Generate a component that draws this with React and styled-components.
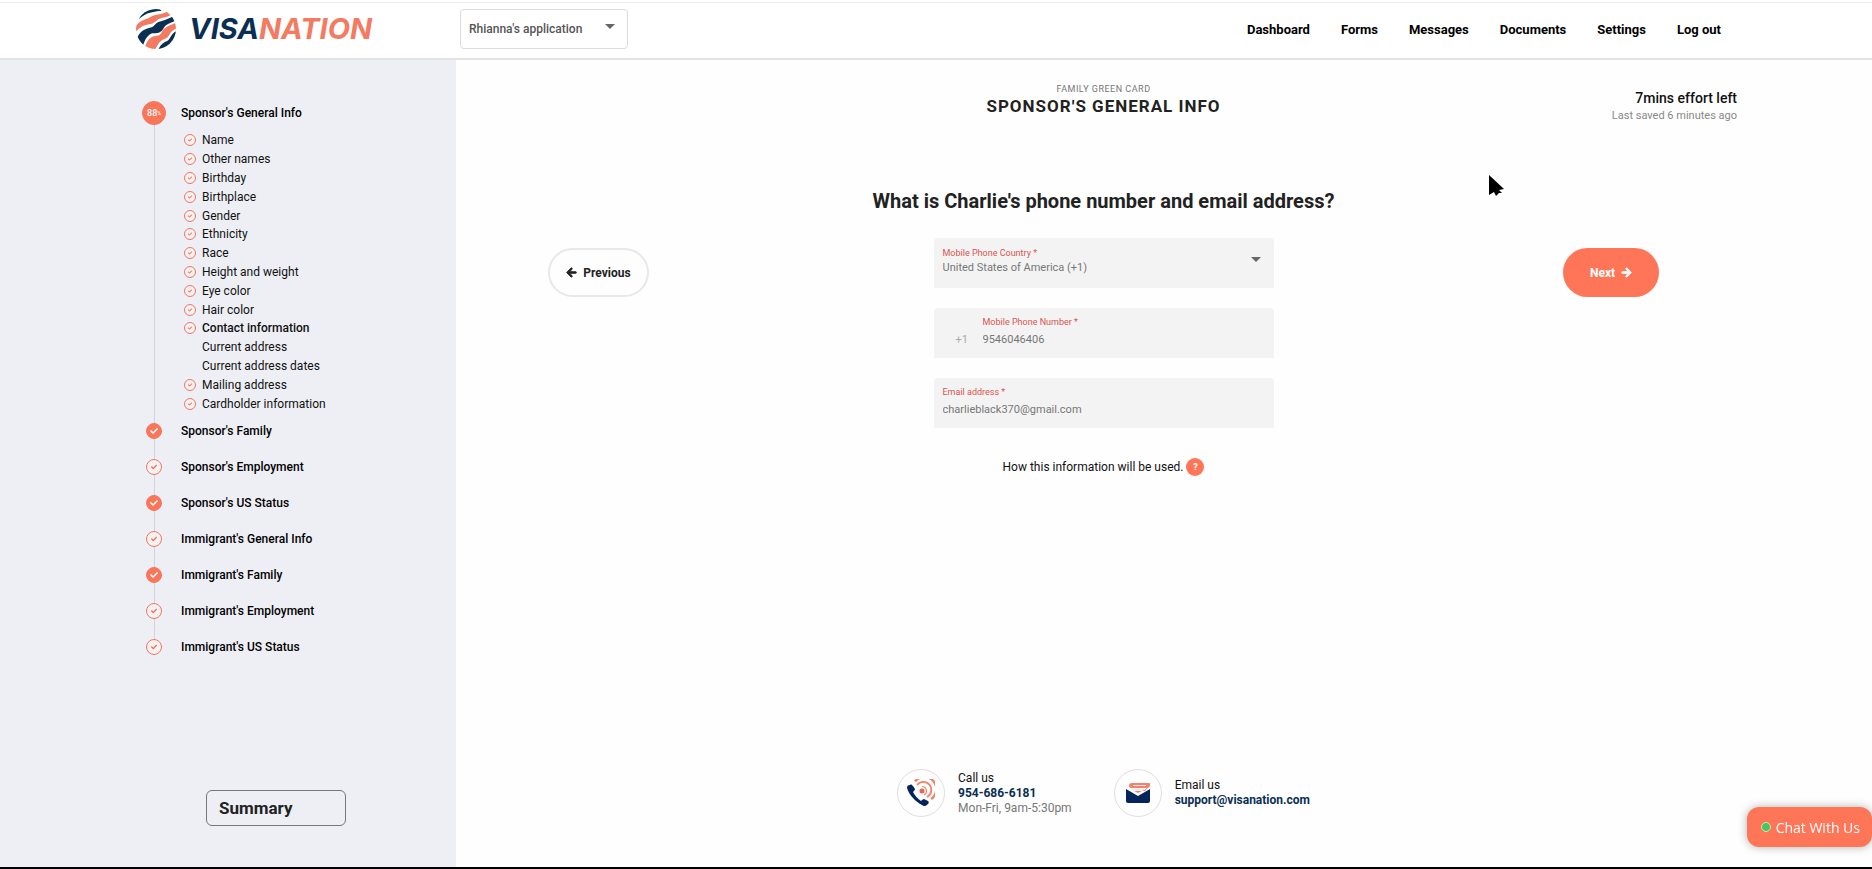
import React, { useState } from "react";
import styled, { createGlobalStyle } from "styled-components";
import { FaArrowLeft, FaArrowRight, FaCheck } from "react-icons/fa";

const topics = [
  { name: "Name", done: true },
  { name: "Other names", done: true },
  { name: "Birthday", done: true },
  { name: "Birthplace", done: true },
  { name: "Gender", done: true },
  { name: "Ethnicity", done: true },
  { name: "Race", done: true },
  { name: "Height and weight", done: true },
  { name: "Eye color", done: true },
  { name: "Hair color", done: true },
  { name: "Contact information", done: true, current: true },
  { name: "Current address" },
  { name: "Current address dates" },
  { name: "Mailing address", done: true },
  { name: "Cardholder information", done: true },
];

const sections = [
  { name: "Sponsor's Family", filled: true },
  { name: "Sponsor's Employment" },
  { name: "Sponsor's US Status", filled: true },
  { name: "Immigrant's General Info" },
  { name: "Immigrant's Family", filled: true },
  { name: "Immigrant's Employment" },
  { name: "Immigrant's US Status" },
];

const links = [
  "Dashboard",
  "Forms",
  "Messages",
  "Documents",
  "Settings",
  "Log out",
];

const Globe = () => (
  <svg width="40" height="40" viewBox="0 0 120 120" aria-hidden="true">
    <clipPath id="globe">
      <circle cx="60" cy="60" r="60" />
    </clipPath>
    <g clipPath="url(#globe)">
      <path
        fill="#0b2f52"
        d="M8 30C22 20 30 13 42 11C54 9 60 5 76 6L70 -4L20 -4Z"
      />
      <path
        fill="#f37b61"
        d="M-4 56C6 42 14 36 28 31C42 27 44 21 58 18C70 15 80 15 94 8L104 18C92 26 84 24 74 28C62 32 58 42 44 45C28 48 14 50 -4 72Z"
      />
      <path
        fill="#0b2f52"
        d="M2 92C8 72 18 64 32 59C46 55 50 56 58 46C66 36 78 38 92 31C100 27 106 26 112 21L118 35C106 41 98 42 90 49C80 58 82 67 68 71C54 74 50 70 40 77C30 84 24 98 20 114Z"
      />
      <path
        fill="#f37b61"
        d="M26 118C32 98 40 86 54 82C68 79 72 80 78 68C86 54 98 51 118 42L124 58C112 62 106 66 100 77C93 89 90 87 80 92C70 97 64 109 56 124Z"
      />
      <path
        fill="#0b2f52"
        d="M66 124C74 106 82 101 92 97C104 92 102 76 122 66L124 124Z"
      />
    </g>
  </svg>
);

const PhoneIcon = () => (
  <svg width="28" height="28" viewBox="0 0 28 28" aria-hidden="true">
    <path
      fill="#06245c"
      d="M0 9C0 7 1 6 3 6C4 5 5 6 6 7L8 10C8 11 7 12 6 13C8 17 11 20 14 22C15 21 16 20 17 20L21 22C22 23 22 24 21 25C19 27 17 28 15 26C9 23 2 16 0 9Z"
    />
    <circle cx="15" cy="12" r="2.5" fill="#e5694f" />
    <g fill="none" stroke="#f0836b">
      <path d="M15 7.5A4.5 4.5 0 0 1 17 16" strokeWidth="1.2" />
      <path d="M10 6A8 8 0 1 1 20 18" strokeWidth="1.8" />
      <path d="M8 2.5A12 12 0 1 1 24 20" strokeWidth="2.4" />
    </g>
  </svg>
);

const MailIcon = () => (
  <svg width="24" height="22" viewBox="0 0 24 22" aria-hidden="true">
    <path
      fill="#f0836b"
      d="M6 1H23Q24 1 24 2V4L22 6L14 10L12 11L8 9H19Q21 8 20 6H6Q3 6 3 4Q3 1 6 1Z"
    />
    <path
      d="M7 3.5H20M6 7.5H18"
      stroke="#fbe3dd"
      strokeWidth="1"
      fill="none"
    />
    <path
      fill="#06245c"
      d="M0 7L12 14L24 7V19Q24 21 22 21H2Q0 21 0 19Z"
    />
  </svg>
);

const Caret = () => (
  <svg width="10" height="5" viewBox="0 0 10 5" aria-hidden="true">
    <path fill="#666" d="M0 0H10L5 5Z" />
  </svg>
);

const App = () => {
  const [phone, setPhone] = useState("9546046406");
  const [email, setEmail] = useState("charlieblack370@gmail.com");

  return (
    <PAGE>
      <GlobalStyle />
      <HEADER>
        <Logo href="#">
          <Globe />
          <span>
            VISA<em>NATION</em>
          </span>
        </Logo>
        <AppPicker>
          <select aria-label="Application">
            <option>Rhianna's application</option>
          </select>
          <Caret />
        </AppPicker>
        <NAV>
          {links.map((ele) => (
            <a key={ele} href="#">
              {ele}
            </a>
          ))}
        </NAV>
      </HEADER>

      <BODY>
        <SIDEBAR>
          <Steps>
            <Step>
              <Marker $size={24} $filled>
                88<small>%</small>
              </Marker>
              <a href="#">Sponsor's General Info</a>
            </Step>
            <Topics>
              {topics.map((ele) => (
                <Topic key={ele.name} $current={ele.current}>
                  {ele.done ? (
                    <Marker $size={12}>
                      <FaCheck size={4} />
                    </Marker>
                  ) : (
                    <span />
                  )}
                  <a href="#">{ele.name}</a>
                </Topic>
              ))}
            </Topics>
            {sections.map((ele) => (
              <Step key={ele.name}>
                <Marker $size={16} $filled={ele.filled}>
                  <FaCheck size={ele.filled ? 8 : 6} />
                </Marker>
                <a href="#">{ele.name}</a>
              </Step>
            ))}
          </Steps>
          <Summary type="button">Summary</Summary>
        </SIDEBAR>

        <MAIN>
          <TitleRow>
            <Title>
              <p>FAMILY GREEN CARD</p>
              <h1>SPONSOR'S GENERAL INFO</h1>
            </Title>
            <Effort>
              <strong>7mins effort left</strong>
              <span>Last saved 6 minutes ago</span>
            </Effort>
          </TitleRow>

          <Question>What is Charlie's phone number and email address?</Question>

          <FormRow>
            <PrevButton type="button">
              <FaArrowLeft size={11} />
              Previous
            </PrevButton>
            <FORM>
              <Field $tight>
                <div>
                  <label htmlFor="country">Mobile Phone Country *</label>
                  <select id="country">
                    <option>United States of America (+1)</option>
                  </select>
                </div>
                <Caret />
              </Field>
              <Field>
                <Prefix>+1</Prefix>
                <div>
                  <label htmlFor="phone">Mobile Phone Number *</label>
                  <input
                    id="phone"
                    type="tel"
                    value={phone}
                    onChange={(e) => setPhone(e.target.value)}
                  />
                </div>
              </Field>
              <Field>
                <div>
                  <label htmlFor="email">Email address *</label>
                  <input
                    id="email"
                    type="email"
                    value={email}
                    onChange={(e) => setEmail(e.target.value)}
                  />
                </div>
              </Field>
              <Usage>
                How this information will be used.
                <button type="button">?</button>
              </Usage>
            </FORM>
            <NextButton type="button">
              Next
              <FaArrowRight size={11} />
            </NextButton>
          </FormRow>

          <CONTACTS>
            <Contact>
              <Round>
                <PhoneIcon />
              </Round>
              <div>
                <p>Call us</p>
                <a href="tel:9546866181">954-686-6181</a>
                <small>Mon-Fri, 9am-5:30pm</small>
              </div>
            </Contact>
            <Contact>
              <Round>
                <MailIcon />
              </Round>
              <div>
                <p>Email us</p>
                <a href="mailto:support@visanation.com">
                  support@visanation.com
                </a>
              </div>
            </Contact>
          </CONTACTS>
        </MAIN>
      </BODY>

      <Chat type="button">
        <i />
        Chat With Us
      </Chat>
      <Pointer width="16" height="22" viewBox="0 0 16 22" aria-hidden="true">
        <path d="M0 0L15 14L10 15L13 18L10 18L7 21L5 17L0 20Z" />
      </Pointer>
    </PAGE>
  );
};

export default App;

const GlobalStyle = createGlobalStyle`
  * {
    box-sizing: border-box;
    margin: 0;
    padding: 0;
  }
  body {
    font-family: Roboto, "Liberation Sans", sans-serif;
    font-size: 12px;
    color: #111;
    background: #fefefe;
  }
  a {
    color: inherit;
    text-decoration: none;
  }
  button,
  input,
  select {
    font: inherit;
    border: 0;
    background: none;
  }
  button {
    cursor: pointer;
  }
  select {
    appearance: none;
  }
`;

const PAGE = styled.div`
  min-height: 100vh;
  display: flex;
  flex-direction: column;
  border-bottom: 2px solid #000;
`;

const HEADER = styled.header`
  height: 60px;
  display: flex;
  align-items: center;
  padding: 0 151px 0 136px;
  background: linear-gradient(#ececec, #ececec) 0 2px / 100% 1px no-repeat #fff;
  border-bottom: 2px solid #e2e3e5;
`;

const Logo = styled.a`
  display: flex;
  align-items: center;
  gap: 13px;
  width: 324px;
  color: #0b2f52;
  font: italic 700 29px/32px Inter, sans-serif;
  em {
    color: #f37b61;
  }
`;

const AppPicker = styled.div`
  display: flex;
  align-items: center;
  width: 168px;
  height: 40px;
  padding: 0 12px 0 8px;
  border: 1px solid #dcdcdc;
  border-radius: 4px;
  select {
    flex: 1;
    font-weight: 500;
    color: #555;
  }
  svg {
    margin-bottom: 6px;
  }
`;

const NAV = styled.nav`
  display: flex;
  gap: 31px;
  margin-left: auto;
  font-size: 13px;
  font-weight: 700;
  color: #000;
`;

const BODY = styled.div`
  flex: 1;
  display: flex;
`;

const SIDEBAR = styled.aside`
  width: 456px;
  display: flex;
  flex-direction: column;
  align-items: flex-start;
  justify-content: space-between;
  padding: 35px 0 41px 142px;
  background: #eeeff4;
`;

const Steps = styled.div`
  width: 240px;
  background: linear-gradient(#d4d5da, #d4d5da) 12px 20px / 1px 530px no-repeat;
`;

const Step = styled.div`
  display: grid;
  grid-template-columns: 24px 1fr;
  column-gap: 15px;
  align-items: center;
  justify-items: center;
  height: 36px;
  font-weight: 500;
  color: #000;
  a {
    justify-self: start;
  }
`;

const Marker = styled.span`
  display: flex;
  align-items: center;
  justify-content: center;
  width: ${(props) => props.$size}px;
  height: ${(props) => props.$size}px;
  border: 1px solid #ee7764;
  border-radius: 50%;
  background: ${(props) => (props.$filled ? "#fb7659" : "#f9f0f0")};
  color: ${(props) => (props.$filled ? "#fff" : "#e86b58")};
  font-size: 9px;
  font-weight: 500;
  small {
    font-size: 5px;
  }
`;

const Topics = styled.ul`
  display: grid;
  grid-auto-rows: 1fr;
  height: 282px;
  margin-left: 42px;
  list-style: none;
`;

const Topic = styled.li`
  display: grid;
  grid-template-columns: 12px 1fr;
  column-gap: 6px;
  align-items: center;
  font-weight: ${(props) => (props.$current ? 500 : 400)};
`;

const Summary = styled.button`
  width: 140px;
  height: 36px;
  margin-left: 64px;
  padding: 0 12px;
  border: 1px solid #777;
  border-radius: 6px;
  font-size: 17px;
  font-weight: 700;
  text-align: left;
  color: #222;
`;

const MAIN = styled.main`
  flex: 1;
  display: flex;
  flex-direction: column;
  padding: 22px 135px 50px 14px;
`;

const TitleRow = styled.div`
  display: grid;
  grid-template-columns: 1fr auto 1fr;
`;

const Title = styled.div`
  grid-column: 2;
  text-align: center;
  p {
    font-size: 9px;
    line-height: 14px;
    letter-spacing: 0.5px;
    color: #777;
  }
  h1 {
    font-size: 17px;
    line-height: 20px;
    letter-spacing: 1px;
    color: #222;
  }
`;

const Effort = styled.div`
  display: flex;
  flex-direction: column;
  padding-top: 7px;
  text-align: right;
  line-height: 18px;
  strong {
    font-size: 14px;
    font-weight: 500;
  }
  span {
    font-size: 11px;
    color: #888;
  }
`;

const Question = styled.h2`
  margin-top: 64px;
  font-size: 20px;
  line-height: 24px;
  text-align: center;
  color: #222;
`;

const FormRow = styled.div`
  display: grid;
  grid-template-columns: 1fr 340px 1fr;
  align-items: start;
  margin-top: 25px;
  padding: 0 78px;
`;

const RoundButton = styled.button`
  display: flex;
  align-items: center;
  justify-content: center;
  gap: 6px;
  height: 49px;
  margin-top: 10px;
  border-radius: 25px;
  font-size: 12px;
  font-weight: 700;
  svg {
    stroke: currentColor;
    stroke-width: 40px;
    overflow: visible;
  }
`;

const PrevButton = styled(RoundButton)`
  width: 101px;
  border: 2px solid #e8e8e8;
  color: #222;
`;

const NextButton = styled(RoundButton)`
  justify-self: end;
  width: 96px;
  background: #fe7558;
  color: #fff;
`;

const FORM = styled.form`
  display: flex;
  flex-direction: column;
  gap: 20px;
`;

const Field = styled.div`
  display: flex;
  align-items: center;
  height: 50px;
  padding: 0 13px 4px 9px;
  border-radius: 4px 4px 0 0;
  background: #f3f3f3;
  div {
    flex: 1;
    display: flex;
    flex-direction: column;
    gap: ${(props) => (props.$tight ? 0 : 3)}px;
  }
  label {
    font-size: 9px;
    line-height: 14px;
    color: #d9534f;
  }
  input,
  select {
    width: 100%;
    font-size: 11px;
    line-height: 16px;
    color: #777;
    outline: none;
  }
  svg {
    margin-bottom: 4px;
  }
`;

const Prefix = styled.span`
  width: 40px;
  padding: 17px 0 0 13px;
  font-size: 11px;
  color: #aaa;
`;

const Usage = styled.p`
  display: flex;
  align-items: center;
  justify-content: center;
  gap: 3px;
  margin-top: 10px;
  button {
    width: 18px;
    height: 18px;
    border-radius: 50%;
    background: #fe7558;
    color: #fff;
    font-size: 9px;
    font-weight: 700;
  }
`;

const CONTACTS = styled.footer`
  display: flex;
  justify-content: center;
  gap: 42px;
  margin-top: auto;
`;

const Contact = styled.div`
  display: flex;
  align-items: center;
  gap: 13px;
  line-height: 15px;
  a {
    display: block;
    font-weight: 700;
    color: #0b2f52;
  }
  small {
    font-size: 12px;
    color: #777;
  }
`;

const Round = styled.span`
  display: flex;
  align-items: center;
  justify-content: center;
  width: 48px;
  height: 48px;
  border: 1px solid #dfdfdf;
  border-radius: 50%;
`;

const Chat = styled.button`
  position: fixed;
  right: 0;
  bottom: 22px;
  display: flex;
  align-items: center;
  gap: 5px;
  height: 40px;
  padding: 0 12px 0 14px;
  border-radius: 12px;
  background: #fe7558;
  box-shadow: 0 0 10px rgba(0, 0, 0, 0.3);
  color: #fff;
  font: 14px "Open Sans", sans-serif;
  i {
    width: 10px;
    height: 10px;
    border: 1px solid #d8e8a0;
    border-radius: 50%;
    background: #44c767;
  }
`;

const Pointer = styled.svg`
  position: fixed;
  left: 1489px;
  top: 175px;
`;
